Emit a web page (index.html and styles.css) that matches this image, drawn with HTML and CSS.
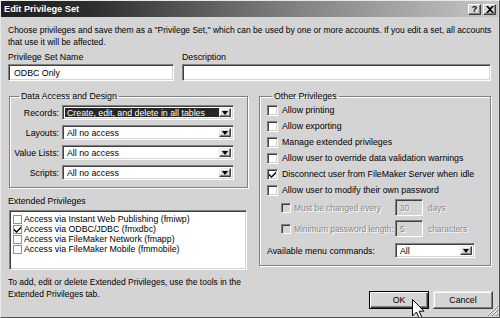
FILE: index.html
```html
<!DOCTYPE html>
<html>
<head>
<meta charset="utf-8">
<link rel="stylesheet" href="styles.css">
</head>
<body>
<div class="window">
  <div class="titlebar">
    <span class="title">Edit Privilege Set</span>
    <div class="tb-buttons">
      <span class="tb-btn">?</span>
      <span class="tb-btn tb-close">
        <svg width="8" height="7" viewBox="0 0 8 7"><path d="M0 0h2l2 2 2-2h2L5 3.5 8 7H6L4 5 2 7H0l3-3.5z" fill="#000"/></svg>
      </span>
    </div>
  </div>
  <div class="content">
    <p class="intro">Choose privileges and save them as a "Privilege Set," which can be used by one or more accounts. If you edit a set, all accounts<br>that use it will be affected.</p>
    <div class="names">
      <div class="field name-field">
        <div class="lbl">Privilege Set Name</div>
        <div class="input sunken">ODBC Only</div>
      </div>
      <div class="field desc-field">
        <div class="lbl">Description</div>
        <div class="input sunken"></div>
      </div>
    </div>
    <div class="main">
      <div class="left">
        <fieldset class="group data-group">
          <legend>Data Access and Design</legend>
          <div class="sel-grid">
            <span class="sel-lbl">Records:</span>
            <div class="select sunken focused"><span class="sel-val">Create, edit, and delete in all tables</span><span class="arrow raised"><i></i></span></div>
            <span class="sel-lbl">Layouts:</span>
            <div class="select sunken"><span class="sel-val">All no access</span><span class="arrow raised"><i></i></span></div>
            <span class="sel-lbl">Value Lists:</span>
            <div class="select sunken"><span class="sel-val">All no access</span><span class="arrow raised"><i></i></span></div>
            <span class="sel-lbl">Scripts:</span>
            <div class="select sunken"><span class="sel-val">All no access</span><span class="arrow raised"><i></i></span></div>
          </div>
        </fieldset>
        <div class="ext-label">Extended Privileges</div>
        <div class="listbox sunken">
          <div class="li"><span class="flatbox"></span>Access via Instant Web Publishing (fmiwp)</div>
          <div class="li"><span class="flatbox"><svg width="7" height="7" viewBox="0 0 7 7"><path d="M0 2.5l2.5 2.5L7 0.5v2L2.5 7 0 4.5z" fill="#000"/></svg></span>Access via ODBC/JDBC (fmxdbc)</div>
          <div class="li"><span class="flatbox"></span>Access via FileMaker Network (fmapp)</div>
          <div class="li"><span class="flatbox"></span>Access via FileMaker Mobile (fmmobile)</div>
        </div>
        <p class="note">To add, edit or delete Extended Privileges, use the tools in the<br>Extended Privileges tab.</p>
      </div>
      <div class="right">
        <fieldset class="group other-group">
          <legend>Other Privileges</legend>
          <div class="cb-row"><span class="cbox sunken"></span>Allow printing</div>
          <div class="cb-row"><span class="cbox sunken"></span>Allow exporting</div>
          <div class="cb-row"><span class="cbox sunken"></span>Manage extended privileges</div>
          <div class="cb-row"><span class="cbox sunken"></span>Allow user to override data validation warnings</div>
          <div class="cb-row"><span class="cbox sunken"><svg width="7" height="7" viewBox="0 0 7 7"><path d="M0 2.5l2.5 2.5L7 0.5v2L2.5 7 0 4.5z" fill="#000"/></svg></span>Disconnect user from FileMaker Server when idle</div>
          <div class="cb-row"><span class="cbox sunken"></span>Allow user to modify their own password</div>
          <div class="sub-row first">
            <span class="sub-lbl disabled"><span class="cbox small sunken dis"></span>Must be changed every</span>
            <div class="small-input sunken dis-input disabled">30</div>
            <span class="disabled unit">days</span>
          </div>
          <div class="sub-row">
            <span class="sub-lbl disabled"><span class="cbox small sunken dis"></span>Minimum password length:</span>
            <div class="small-input sunken dis-input disabled">5</div>
            <span class="disabled unit">characters</span>
          </div>
          <div class="menu-row">
            <span class="menu-lbl">Available menu commands:</span>
            <div class="select sunken menu-select"><span class="sel-val">All</span><span class="arrow raised"><i></i></span></div>
          </div>
        </fieldset>
        <div class="buttons">
          <div class="btn default">OK</div>
          <div class="btn raised">Cancel</div>
        </div>
      </div>
    </div>
  </div>
  <svg class="grip" width="11" height="11" viewBox="0 0 11 11">
    <path d="M10 1L1 10M10 5L5 10M10 9L9 10" stroke="#fff" stroke-width="1"/>
    <path d="M11 1L1 11M11 5L5 11M11 9L9 11" stroke="#808080" stroke-width="1"/>
  </svg>
  <svg class="cursor" width="13" height="21" viewBox="0 0 13 21">
    <path d="M0.5 0.5V17L4.5 13L7.2 19.5L9.8 18.4L7.2 12.2H12Z" fill="#fff" stroke="#000" stroke-width="1" stroke-linejoin="miter"/>
  </svg>
</div>
</body>
</html>
```

FILE: styles.css
```css
* { box-sizing: border-box; }
html, body { margin: 0; padding: 0; background: #d4d4d4; }
body {
  font-family: "Liberation Sans", Arial, sans-serif;
  font-size: 8.8px;
  color: #000;
}
.window {
  position: relative;
  width: 500px;
  height: 318px;
  background: #d4d4d4;
  border-top: 1px solid #e8e8e8;
  border-left: 1px solid #e8e8e8;
  border-right: 1px solid #505050;
  border-bottom: 1px solid #505050;
  overflow: hidden;
}
.titlebar {
  height: 16px;
  margin: 0 1px 0 0;
  background: linear-gradient(to right, #1e1e1e 0%, #2e2e2e 18%, #7a7a7a 55%, #c6c6c6 100%);
  display: flex;
  align-items: center;
  justify-content: space-between;
  padding: 0 2px 0 3px;
}
.title {
  color: #fff;
  font-weight: bold;
  font-size: 9.2px;
}
.tb-buttons { display: flex; gap: 2px; }
.tb-btn {
  width: 13px;
  height: 11px;
  background: #d4d4d4;
  border: 1px solid;
  border-color: #fff #404040 #404040 #fff;
  box-shadow: inset -1px -1px #808080;
  font-weight: bold;
  font-size: 9px;
  line-height: 9px;
  text-align: center;
  display: flex;
  align-items: center;
  justify-content: center;
}
.content { padding: 0 8px 0 7px; }
.intro {
  margin: 7px 0 0 0;
  line-height: 12px;
  white-space: nowrap;
  font-size: 8.5px;
}
.names {
  display: flex;
  gap: 8px;
  margin-top: 3px;
}
.lbl { line-height: 12px; height: 13px; }
.name-field { width: 166px; }
.desc-field { flex: 1; }
.input {
  height: 17px;
  padding: 3px 5px;
  line-height: 11px;
}
.sunken {
  background: #fff;
  border: 1px solid;
  border-color: #808080 #fff #fff #808080;
  box-shadow: inset 1px 1px #404040, inset -1px -1px #d4d4d4;
}
.raised {
  background: #d4d4d4;
  border: 1px solid;
  border-color: #e8e8e8 #404040 #404040 #e8e8e8;
  box-shadow: inset -1px -1px #808080, inset 1px 1px #fff;
}
.main {
  display: flex;
  gap: 11px;
  margin-top: 10px;
  align-items: flex-start;
}
.left { width: 240px; }
.group {
  margin: 0;
  border: 1px solid #808080;
  box-shadow: inset 1px 1px #fff, 1px 1px #fff;
  padding: 0;
}
.group legend {
  padding: 0 2px;
  margin-left: 5px;
  line-height: 11px;
}
.data-group {
  width: 238px;
  margin-left: 1px;
  height: 97px;
  padding: 3px 13px 0 4px;
}
.sel-grid {
  display: grid;
  grid-template-columns: 45px 172px;
  column-gap: 3px;
  row-gap: 5px;
  align-items: center;
}
.sel-lbl { text-align: right; white-space: nowrap; }
.select {
  height: 15px;
  display: flex;
  align-items: stretch;
  padding: 2px;
}
.sel-val {
  flex: 1;
  line-height: 11px;
  padding-left: 2px;
  white-space: nowrap;
  overflow: hidden;
}
.focused .sel-val { background: #262626; color: #fff; }
.arrow {
  width: 12px;
  display: flex;
  align-items: center;
  justify-content: center;
}
.arrow i {
  display: block;
  width: 0; height: 0;
  border-left: 3.5px solid transparent;
  border-right: 3.5px solid transparent;
  border-top: 4px solid #000;
}
.ext-label { margin-top: 7px; line-height: 12px; }
.listbox {
  margin-top: 3px;
  margin-left: 1px;
  width: 238px;
  height: 60px;
  padding: 3px 2px;
}
.li {
  display: flex;
  align-items: center;
  height: 10px;
  line-height: 10px;
  white-space: nowrap;
}
.flatbox {
  width: 9px; height: 9px;
  border: 1px solid #909090;
  background: #fff;
  margin: 0 2px 0 1px;
  display: flex; align-items: center; justify-content: center;
}
.note { margin: 6px 0 0 0; line-height: 12px; white-space: nowrap; font-size: 8.5px; }
.right { width: 232px; }
.other-group {
  width: 232px;
  height: 175px;
  padding: 0 6px 0 7px;
}
.cb-row {
  display: flex;
  align-items: center;
  height: 16px;
  white-space: nowrap;
}
.cbox {
  width: 11px; height: 11px;
  margin-right: 4px;
  display: flex; align-items: center; justify-content: center;
  flex: none;
}
.cbox.small { width: 10px; height: 10px; margin-right: 3px; }
.cbox.dis { background: #d4d4d4; }
.disabled { color: #888; text-shadow: 1px 1px #fff; }
.sub-row {
  display: flex;
  align-items: center;
  height: 19px;
  margin-top: 2px;
  padding-left: 14px;
  white-space: nowrap;
  font-size: 8.4px;
}
.sub-row.first { margin-top: 0; }
.sub-lbl { width: 114px; display: flex; align-items: center; }
.small-input {
  width: 28px;
  height: 17px;
  line-height: 11px;
  padding: 3px 4px;
  flex: none;
}
.dis-input { background: #d4d4d4; }
.unit { margin-left: 5px; }
.menu-row {
  display: flex;
  align-items: center;
  margin-top: 4px;
  height: 17px;
}
.menu-lbl { width: 128px; }
.menu-select { width: 80px; }
.buttons {
  display: flex;
  justify-content: flex-end;
  gap: 4px;
  margin-top: 25px;
  margin-right: -2px;
}
.btn {
  width: 60px;
  height: 18px;
  display: flex;
  align-items: center;
  justify-content: center;
}
.btn.default {
  background: #d4d4d4;
  border: 1px solid #000;
  box-shadow: inset 1px 1px #fff, inset -1px -1px #404040, inset -2px -2px #808080;
}
.grip { position: absolute; right: 1px; bottom: 1px; }
.cursor { position: absolute; left: 411px; top: 298px; }
```
